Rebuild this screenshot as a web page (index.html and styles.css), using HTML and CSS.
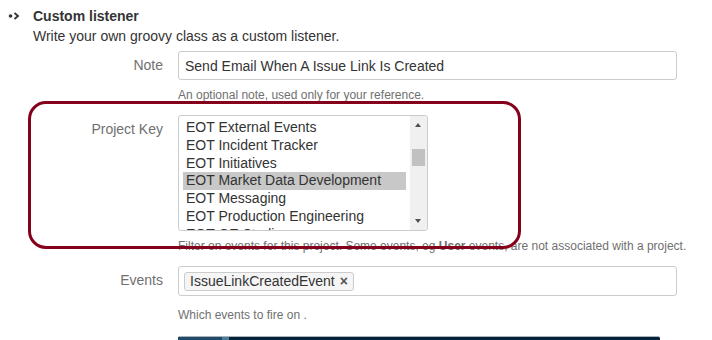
FILE: index.html
```html
<!DOCTYPE html>
<html lang="en">
<head>
    <meta charset="UTF-8">
    <title>Custom listener</title>
    <link rel="stylesheet" href="styles.css">
</head>
<body>
    <div class="listener">
        <div class="listener-head">
            <span class="bullet">
                <svg width="14" height="8" viewBox="0 0 14 8">
                    <circle cx="2.5" cy="4" r="1.8" fill="#333"/>
                    <path d="M6.5 1 L10 4 L6.5 7" fill="none" stroke="#333" stroke-width="1.8"/>
                </svg>
            </span>
            <span class="title">Custom listener</span>
        </div>
        <p class="summary">Write your own groovy class as a custom listener.</p>

        <form class="form">
            <div class="field-group">
                <label class="field-label">Note</label>
                <div class="field">
                    <input class="text" type="text" value="Send Email When A Issue Link Is Created">
                    <div class="description">An optional note, used only for your reference.</div>
                </div>
            </div>

            <div class="field-group">
                <label class="field-label">Project Key</label>
                <div class="field">
                    <div class="listbox">
                        <ul class="options">
                            <li>EOT External Events</li>
                            <li>EOT Incident Tracker</li>
                            <li>EOT Initiatives</li>
                            <li class="selected">EOT Market Data Development</li>
                            <li>EOT Messaging</li>
                            <li>EOT Production Engineering</li>
                            <li>EOT QE Studio</li>
                        </ul>
                        <div class="scrollbar">
                            <span class="arrow up"></span>
                            <span class="thumb"></span>
                            <span class="arrow down"></span>
                        </div>
                    </div>
                    <div class="description">Filter on events for this project. Some events, eg <b>User</b> events, are not associated with a project.</div>
                </div>
            </div>

            <div class="field-group">
                <label class="field-label">Events</label>
                <div class="field">
                    <div class="text multi">
                        <span class="tag">IssueLinkCreatedEvent <span class="remove">×</span></span>
                    </div>
                    <div class="description wide">Which events to fire on .</div>
                </div>
            </div>

            <div class="field-group">
                <span class="field-label"></span>
                <div class="field">
                    <div class="editor-bar"><span class="gutter"></span><span class="mark"></span></div>
                </div>
            </div>
        </form>

        <!-- annotation drawn over the screenshot -->
        <div class="highlight"></div>
    </div>
</body>
</html>
```

FILE: styles.css
```css
body {
    margin: 0;
    background: #fff;
    color: #333;
    font-family: "Liberation Sans", Arial, sans-serif;
    font-size: 14px;
    overflow: hidden;
}
.listener {
    position: relative;
    height: 340px;
}
.listener-head {
    display: flex;
    align-items: center;
    height: 20px;
    margin-top: 6px;
}
.bullet {
    width: 33px;
    padding-left: 8px;
    box-sizing: border-box;
    display: flex;
    align-items: center;
}
.title {
    font-weight: bold;
    line-height: 20px;
}
.summary {
    margin: 0 0 0 33px;
    line-height: 20px;
}
.form {
    margin-top: 5px;
}
.field-group {
    display: grid;
    grid-template-columns: 163px 499px;
    column-gap: 15px;
    margin-bottom: 12px;
}
.field-label {
    text-align: right;
    color: #707070;
    line-height: 20px;
    padding-top: 4px;
}
.text {
    display: block;
    width: 100%;
    height: 29px;
    box-sizing: border-box;
    border: 1px solid #ccc;
    border-radius: 3px;
    padding: 4px 6px;
    font: 14px "Liberation Sans", Arial, sans-serif;
    color: #333;
    background: #fff;
}
.text.multi {
    height: 30px;
    padding: 5px;
}
.description {
    margin-top: 7px;
    font-size: 12px;
    line-height: 16px;
    color: #707070;
    white-space: nowrap;
}
.description.wide {
    margin-top: 11px;
}
.listbox {
    display: flex;
    width: 250px;
    height: 116px;
    box-sizing: border-box;
    border: 1px solid #ccc;
    border-radius: 3px;
    overflow: hidden;
}
.options {
    flex: 1;
    list-style: none;
    margin: 0;
    padding: 3px 4px 0 4px;
    overflow: hidden;
}
.options li {
    height: 17.8px;
    line-height: 17.8px;
    padding-left: 3px;
    white-space: nowrap;
}
.options li.selected {
    background: #c8c8c8;
}
.scrollbar {
    position: relative;
    width: 17px;
    background: #f0f0f0;
}
.arrow {
    position: absolute;
    left: 5px;
    width: 0;
    height: 0;
    border-left: 3.5px solid transparent;
    border-right: 3.5px solid transparent;
}
.arrow.up {
    top: 7px;
    border-bottom: 4px solid #505050;
}
.arrow.down {
    bottom: 7px;
    border-top: 4px solid #505050;
}
.thumb {
    position: absolute;
    left: 2px;
    top: 33px;
    width: 13px;
    height: 17px;
    background: #c1c1c1;
}
.tag {
    display: inline-block;
    height: 19px;
    line-height: 17px;
    box-sizing: border-box;
    padding: 0 5px;
    border: 1px solid #ccc;
    border-radius: 3px;
    background: #f5f5f5;
    color: #333;
}
.remove {
    color: #555;
    font-weight: bold;
    margin-left: 1px;
}
.editor-bar {
    display: flex;
    width: 482px;
    height: 8px;
    margin-top: 1px;
    border-top: 1px solid #a9b3ba;
    border-radius: 2px 2px 0 0;
    background: #062238;
}
.gutter {
    width: 44px;
    background: #214a66;
}
.mark {
    width: 7px;
    background: #4b7f98;
}
.highlight {
    position: absolute;
    left: 28px;
    top: 95px;
    width: 493px;
    height: 148px;
    box-sizing: border-box;
    border: 3px solid #85001a;
    border-radius: 18px;
    pointer-events: none;
}
```
